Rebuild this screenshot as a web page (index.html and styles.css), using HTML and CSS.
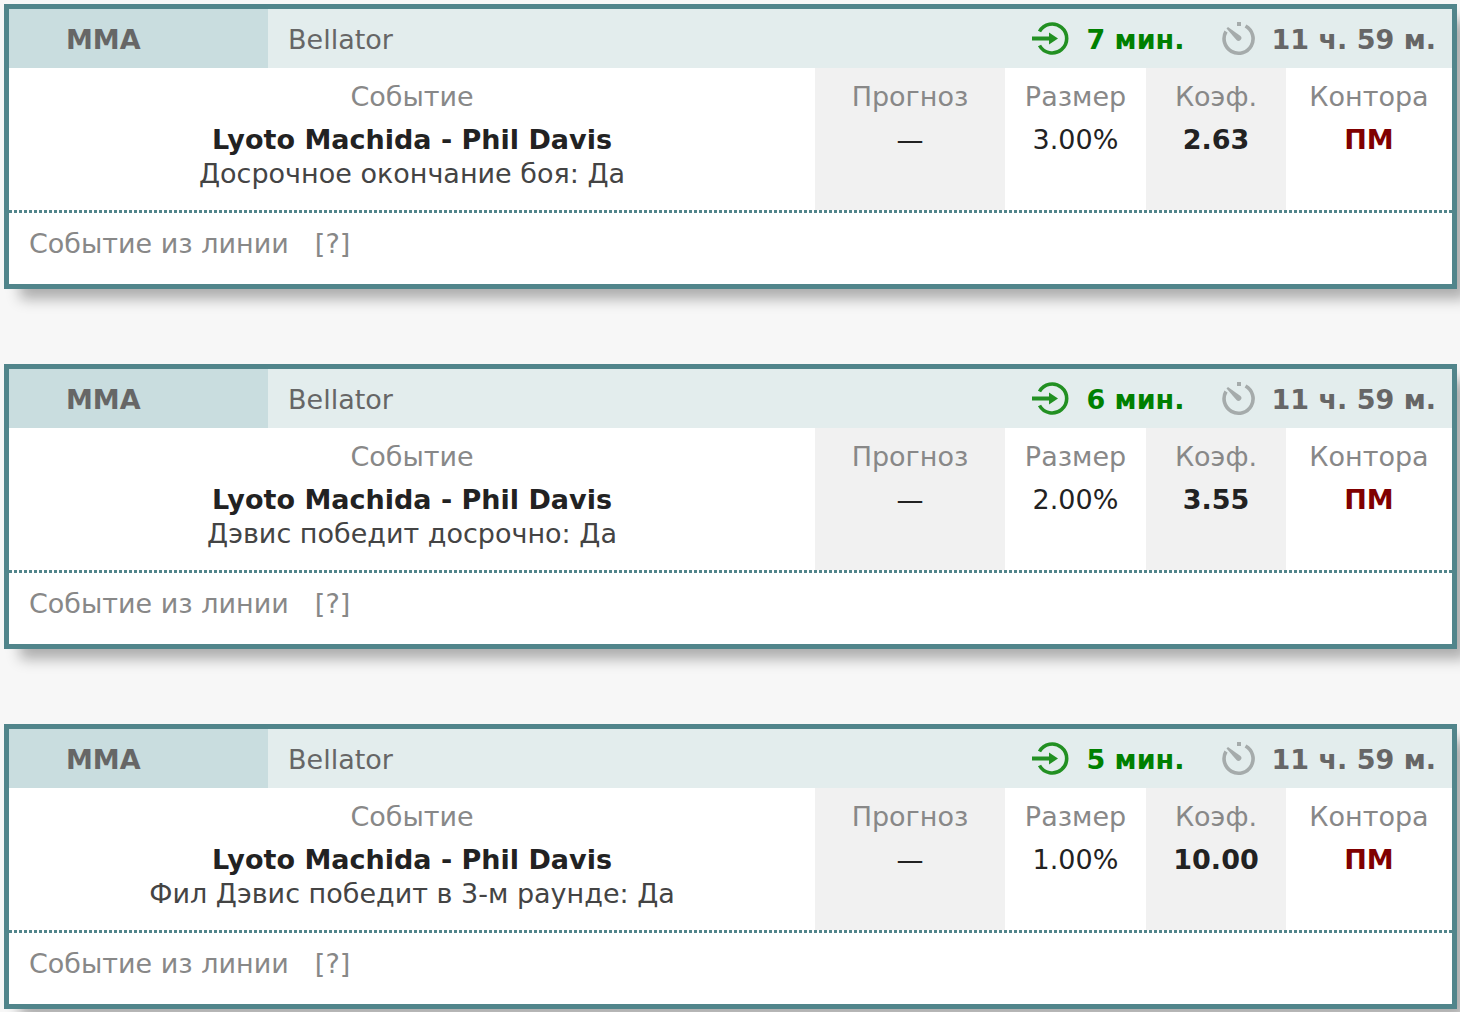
FILE: index.html
```html
<!DOCTYPE html>
<html lang="ru">
<head>
<meta charset="utf-8">
<meta name="viewport" content="width=device-width, initial-scale=1">
<title>Bellator</title>
<link rel="stylesheet" href="styles.css">
</head>
<body>
<svg class="sprite" aria-hidden="true">
  <symbol id="icon-enter" viewBox="0 0 38 34">
    <path d="M7.500 9.500A14.500 14.500 0 1 1 7.500 23.500" fill="none" stroke="currentColor" stroke-width="3.600"/>
    <path d="M0 14.500h17v-4l9 6-9 6v-4H0z" fill="currentColor"/>
  </symbol>
  <symbol id="icon-timer" viewBox="0 0 34 34">
    <path d="M4 9.500A14.500 14.500 0 1 0 23.500 4" fill="none" stroke="currentColor" stroke-width="3.600"/>
    <path d="M4.500 6.500l1.500-1.500 12.500 9a2.800 2.800 0 0 1-4 4z" fill="currentColor"/>
    <path d="M15 0h4v4h-4z" fill="currentColor"/>
  </symbol>
</svg>
<main class="bets">
  <article class="bet">
    <header class="bet-head">
      <div class="sport">MMA</div>
      <div class="league">Bellator</div>
      <div class="posted"><svg class="icon-enter"><use href="#icon-enter"/></svg><span>7 мин.</span></div>
      <div class="remaining"><svg class="icon-timer"><use href="#icon-timer"/></svg><span>11 ч. 59 м.</span></div>
    </header>
    <table class="odds">
      <thead><tr><th class="event">Событие</th><th class="pick shaded">Прогноз</th><th class="stake">Размер</th><th class="rate shaded">Коэф.</th><th class="bookie">Контора</th></tr></thead>
      <tbody><tr><td><strong>Lyoto Machida - Phil Davis</strong><div class="outcome">Досрочное окончание боя: Да</div></td><td class="shaded">—</td><td>3.00%</td><td class="shaded"><strong>2.63</strong></td><td class="bookie-name">ПМ</td></tr></tbody>
    </table>
    <footer class="bet-foot"><span>Событие из линии</span><a class="help" href="#">[?]</a></footer>
  </article>
  <article class="bet">
    <header class="bet-head">
      <div class="sport">MMA</div>
      <div class="league">Bellator</div>
      <div class="posted"><svg class="icon-enter"><use href="#icon-enter"/></svg><span>6 мин.</span></div>
      <div class="remaining"><svg class="icon-timer"><use href="#icon-timer"/></svg><span>11 ч. 59 м.</span></div>
    </header>
    <table class="odds">
      <thead><tr><th class="event">Событие</th><th class="pick shaded">Прогноз</th><th class="stake">Размер</th><th class="rate shaded">Коэф.</th><th class="bookie">Контора</th></tr></thead>
      <tbody><tr><td><strong>Lyoto Machida - Phil Davis</strong><div class="outcome">Дэвис победит досрочно: Да</div></td><td class="shaded">—</td><td>2.00%</td><td class="shaded"><strong>3.55</strong></td><td class="bookie-name">ПМ</td></tr></tbody>
    </table>
    <footer class="bet-foot"><span>Событие из линии</span><a class="help" href="#">[?]</a></footer>
  </article>
  <article class="bet">
    <header class="bet-head">
      <div class="sport">MMA</div>
      <div class="league">Bellator</div>
      <div class="posted"><svg class="icon-enter"><use href="#icon-enter"/></svg><span>5 мин.</span></div>
      <div class="remaining"><svg class="icon-timer"><use href="#icon-timer"/></svg><span>11 ч. 59 м.</span></div>
    </header>
    <table class="odds">
      <thead><tr><th class="event">Событие</th><th class="pick shaded">Прогноз</th><th class="stake">Размер</th><th class="rate shaded">Коэф.</th><th class="bookie">Контора</th></tr></thead>
      <tbody><tr><td><strong>Lyoto Machida - Phil Davis</strong><div class="outcome">Фил Дэвис победит в 3-м раунде: Да</div></td><td class="shaded">—</td><td>1.00%</td><td class="shaded"><strong>10.00</strong></td><td class="bookie-name">ПМ</td></tr></tbody>
    </table>
    <footer class="bet-foot"><span>Событие из линии</span><a class="help" href="#">[?]</a></footer>
  </article>
</main>
</body>
</html>
```
FILE: styles.css
```css
* {
  box-sizing: border-box;
}

html {
  overflow-x: hidden;
}

body {
  margin: 0;
  background: #f7f7f7;
  color: #222;
  font: 27px/34px Verdana, "DejaVu Sans", sans-serif;
}

.sprite {
  display: none;
}

.bets {
  display: flex;
  flex-direction: column;
  gap: 75px;
  padding: 4px 3px 3px 4px;
}

.bet {
  background: #fff;
  border: 5px solid #51858b;
  box-shadow: 13px 13px 13px -3px rgba(0, 0, 0, 0.3);
}

.bet-head {
  display: flex;
  align-items: stretch;
  background: #e3eded;
  color: #666;
}

.bet-head > div {
  display: flex;
  align-items: center;
  padding: 14px 0 11px;
}

.bet-head .sport {
  width: 259px;
  padding-left: 57px;
  background: #c9dddf;
  font-weight: bold;
}

.bet-head .league {
  flex: 1;
  padding-left: 20px;
}

.posted,
.remaining {
  gap: 16px;
  font-weight: bold;
}

.posted {
  margin-right: 37px;
  color: #008000;
}

.bet-head .remaining {
  padding-right: 16px;
}

.icon-enter,
.icon-timer {
  height: 34px;
  margin-top: -3px;
}

.icon-enter {
  width: 38px;
  color: #229022;
}

.icon-timer {
  width: 34px;
  color: #a5abab;
}

.odds {
  width: 100%;
  table-layout: fixed;
  border-collapse: collapse;
  text-align: center;
}

.odds th {
  padding: 12px 0 9px;
  color: #888;
  font-weight: normal;
}

.odds td {
  padding: 0 0 19px;
  vertical-align: top;
}

.pick {
  width: 190px;
}

.stake {
  width: 141px;
}

.rate {
  width: 140px;
}

.bookie {
  width: 166px;
}

.shaded {
  background: #f1f1f1;
}

.outcome {
  color: #444;
}

.odds .bookie-name {
  color: #800000;
  font-weight: bold;
}

.bet-foot {
  display: flex;
  gap: 26px;
  padding: 17px 20px 23px;
  background: repeating-linear-gradient(90deg, #51858b 0 3px, #fff 3px 5px) top / 100% 3px no-repeat;
  color: #888;
}

.help {
  color: inherit;
  text-decoration: none;
}
```
